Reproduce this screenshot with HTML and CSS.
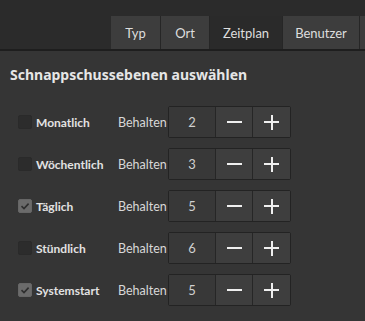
FILE: index.html
```html
<!DOCTYPE html>
<html lang="de">
<head>
<meta charset="utf-8">
<link rel="stylesheet" href="styles.css">
</head>
<body>
<div class="header">
  <div class="tabs">
    <div class="tab t-typ">Typ</div>
    <div class="tab t-ort">Ort</div>
    <div class="tab t-zeit active">Zeitplan</div>
    <div class="tab t-ben">Benutzer</div>
    <div class="tab t-more"></div>
  </div>
</div>
<div class="content">
  <h1 class="title">Schnappschussebenen auswählen</h1>
  <div class="rows">
    <div class="row">
      <label class="check"><span class="box"></span><span class="name">Monatlich</span></label>
      <span class="keep">Behalten</span>
      <div class="spin"><span class="val">2</span><span class="btn minus"><i></i></span><span class="btn plus"><i></i><b></b></span></div>
    </div>
    <div class="row">
      <label class="check"><span class="box"></span><span class="name">Wöchentlich</span></label>
      <span class="keep">Behalten</span>
      <div class="spin"><span class="val">3</span><span class="btn minus"><i></i></span><span class="btn plus"><i></i><b></b></span></div>
    </div>
    <div class="row">
      <label class="check"><span class="box on"><svg viewBox="0 0 14 14" width="14" height="14"><path d="M3.5 7.2 L6 9.6 L10.6 4.6" fill="none" stroke="#2e2e2e" stroke-width="1.6"/></svg></span><span class="name">Täglich</span></label>
      <span class="keep">Behalten</span>
      <div class="spin"><span class="val">5</span><span class="btn minus"><i></i></span><span class="btn plus"><i></i><b></b></span></div>
    </div>
    <div class="row">
      <label class="check"><span class="box"></span><span class="name">Stündlich</span></label>
      <span class="keep">Behalten</span>
      <div class="spin"><span class="val">6</span><span class="btn minus"><i></i></span><span class="btn plus"><i></i><b></b></span></div>
    </div>
    <div class="row">
      <label class="check"><span class="box on"><svg viewBox="0 0 14 14" width="14" height="14"><path d="M3.5 7.2 L6 9.6 L10.6 4.6" fill="none" stroke="#2e2e2e" stroke-width="1.6"/></svg></span><span class="name">Systemstart</span></label>
      <span class="keep">Behalten</span>
      <div class="spin"><span class="val">5</span><span class="btn minus"><i></i></span><span class="btn plus"><i></i><b></b></span></div>
    </div>
  </div>
</div>
</body>
</html>
```

FILE: styles.css
```css
* { box-sizing: border-box; }
html, body { margin: 0; padding: 0; }
body {
  width: 365px;
  height: 321px;
  overflow: hidden;
  background: #353535;
  font-family: Lato, "Noto Sans", sans-serif;
  color: #dcdcdc;
}
.header {
  height: 51px;
  background: #2b2b2b;
  border-bottom: 2px solid #1e1e1e;
  padding: 16px 0 0 111px;
  overflow: hidden;
}
.tabs {
  display: flex;
  height: 33px;
  white-space: nowrap;
}
.tab {
  flex: none;
  height: 33px;
  display: flex;
  align-items: center;
  justify-content: center;
  background: #3d3d3d;
  border-right: 1px solid #262626;
  font-size: 13px;
  color: #dedede;
}
.tab.active { background: #2a2a2a; }
.t-typ { width: 50px; }
.t-ort { width: 49px; }
.t-zeit { width: 73px; }
.t-ben { width: 77px; }
.t-more { width: 80px; }
.content { padding: 14px 0 0 0; }
.title {
  margin: 0 0 0 10px;
  font-family: "Noto Sans", sans-serif;
  font-size: 14px;
  font-weight: bold;
  color: #e6e6e6;
  line-height: 20px;
}
.rows {
  display: flex;
  flex-direction: column;
  gap: 10px;
  padding: 21px 0 0 18px;
}
.row {
  display: flex;
  align-items: center;
  height: 32px;
}
.check {
  display: flex;
  align-items: center;
  width: 100px;
  gap: 4px;
}
.box {
  width: 14px;
  height: 14px;
  background: #2c2c2c;
  border: 1px solid #2a2a2a;
  border-radius: 2px;
  display: flex;
}
.box.on { background: #6b6b6b; border-color: #666; }
.box svg { margin: -1px; }
.name {
  font-size: 12px;
  font-weight: bold;
  color: #e2e2e2;
}
.keep {
  width: 50px;
  font-size: 12.5px;
  color: #d8d8d8;
}
.spin {
  display: flex;
  height: 32px;
  border: 1px solid #232323;
  border-radius: 2px;
  background: #3a3a3a;
}
.val {
  width: 47px;
  display: flex;
  align-items: center;
  justify-content: center;
  font-size: 13px;
  color: #d0d0d0;
  background: #383838;
  border-right: 1px solid #262626;
}
.btn {
  width: 37px;
  position: relative;
  background: #3e3e3e;
}
.btn.minus { border-right: 1px solid #262626; }
.btn i {
  position: absolute;
  left: 50%;
  top: 50%;
  width: 15px;
  height: 2px;
  margin: -1px 0 0 -7.5px;
  background: #efefef;
}
.btn b {
  position: absolute;
  left: 50%;
  top: 50%;
  width: 2px;
  height: 15px;
  margin: -7.5px 0 0 -1px;
  background: #efefef;
}
```
